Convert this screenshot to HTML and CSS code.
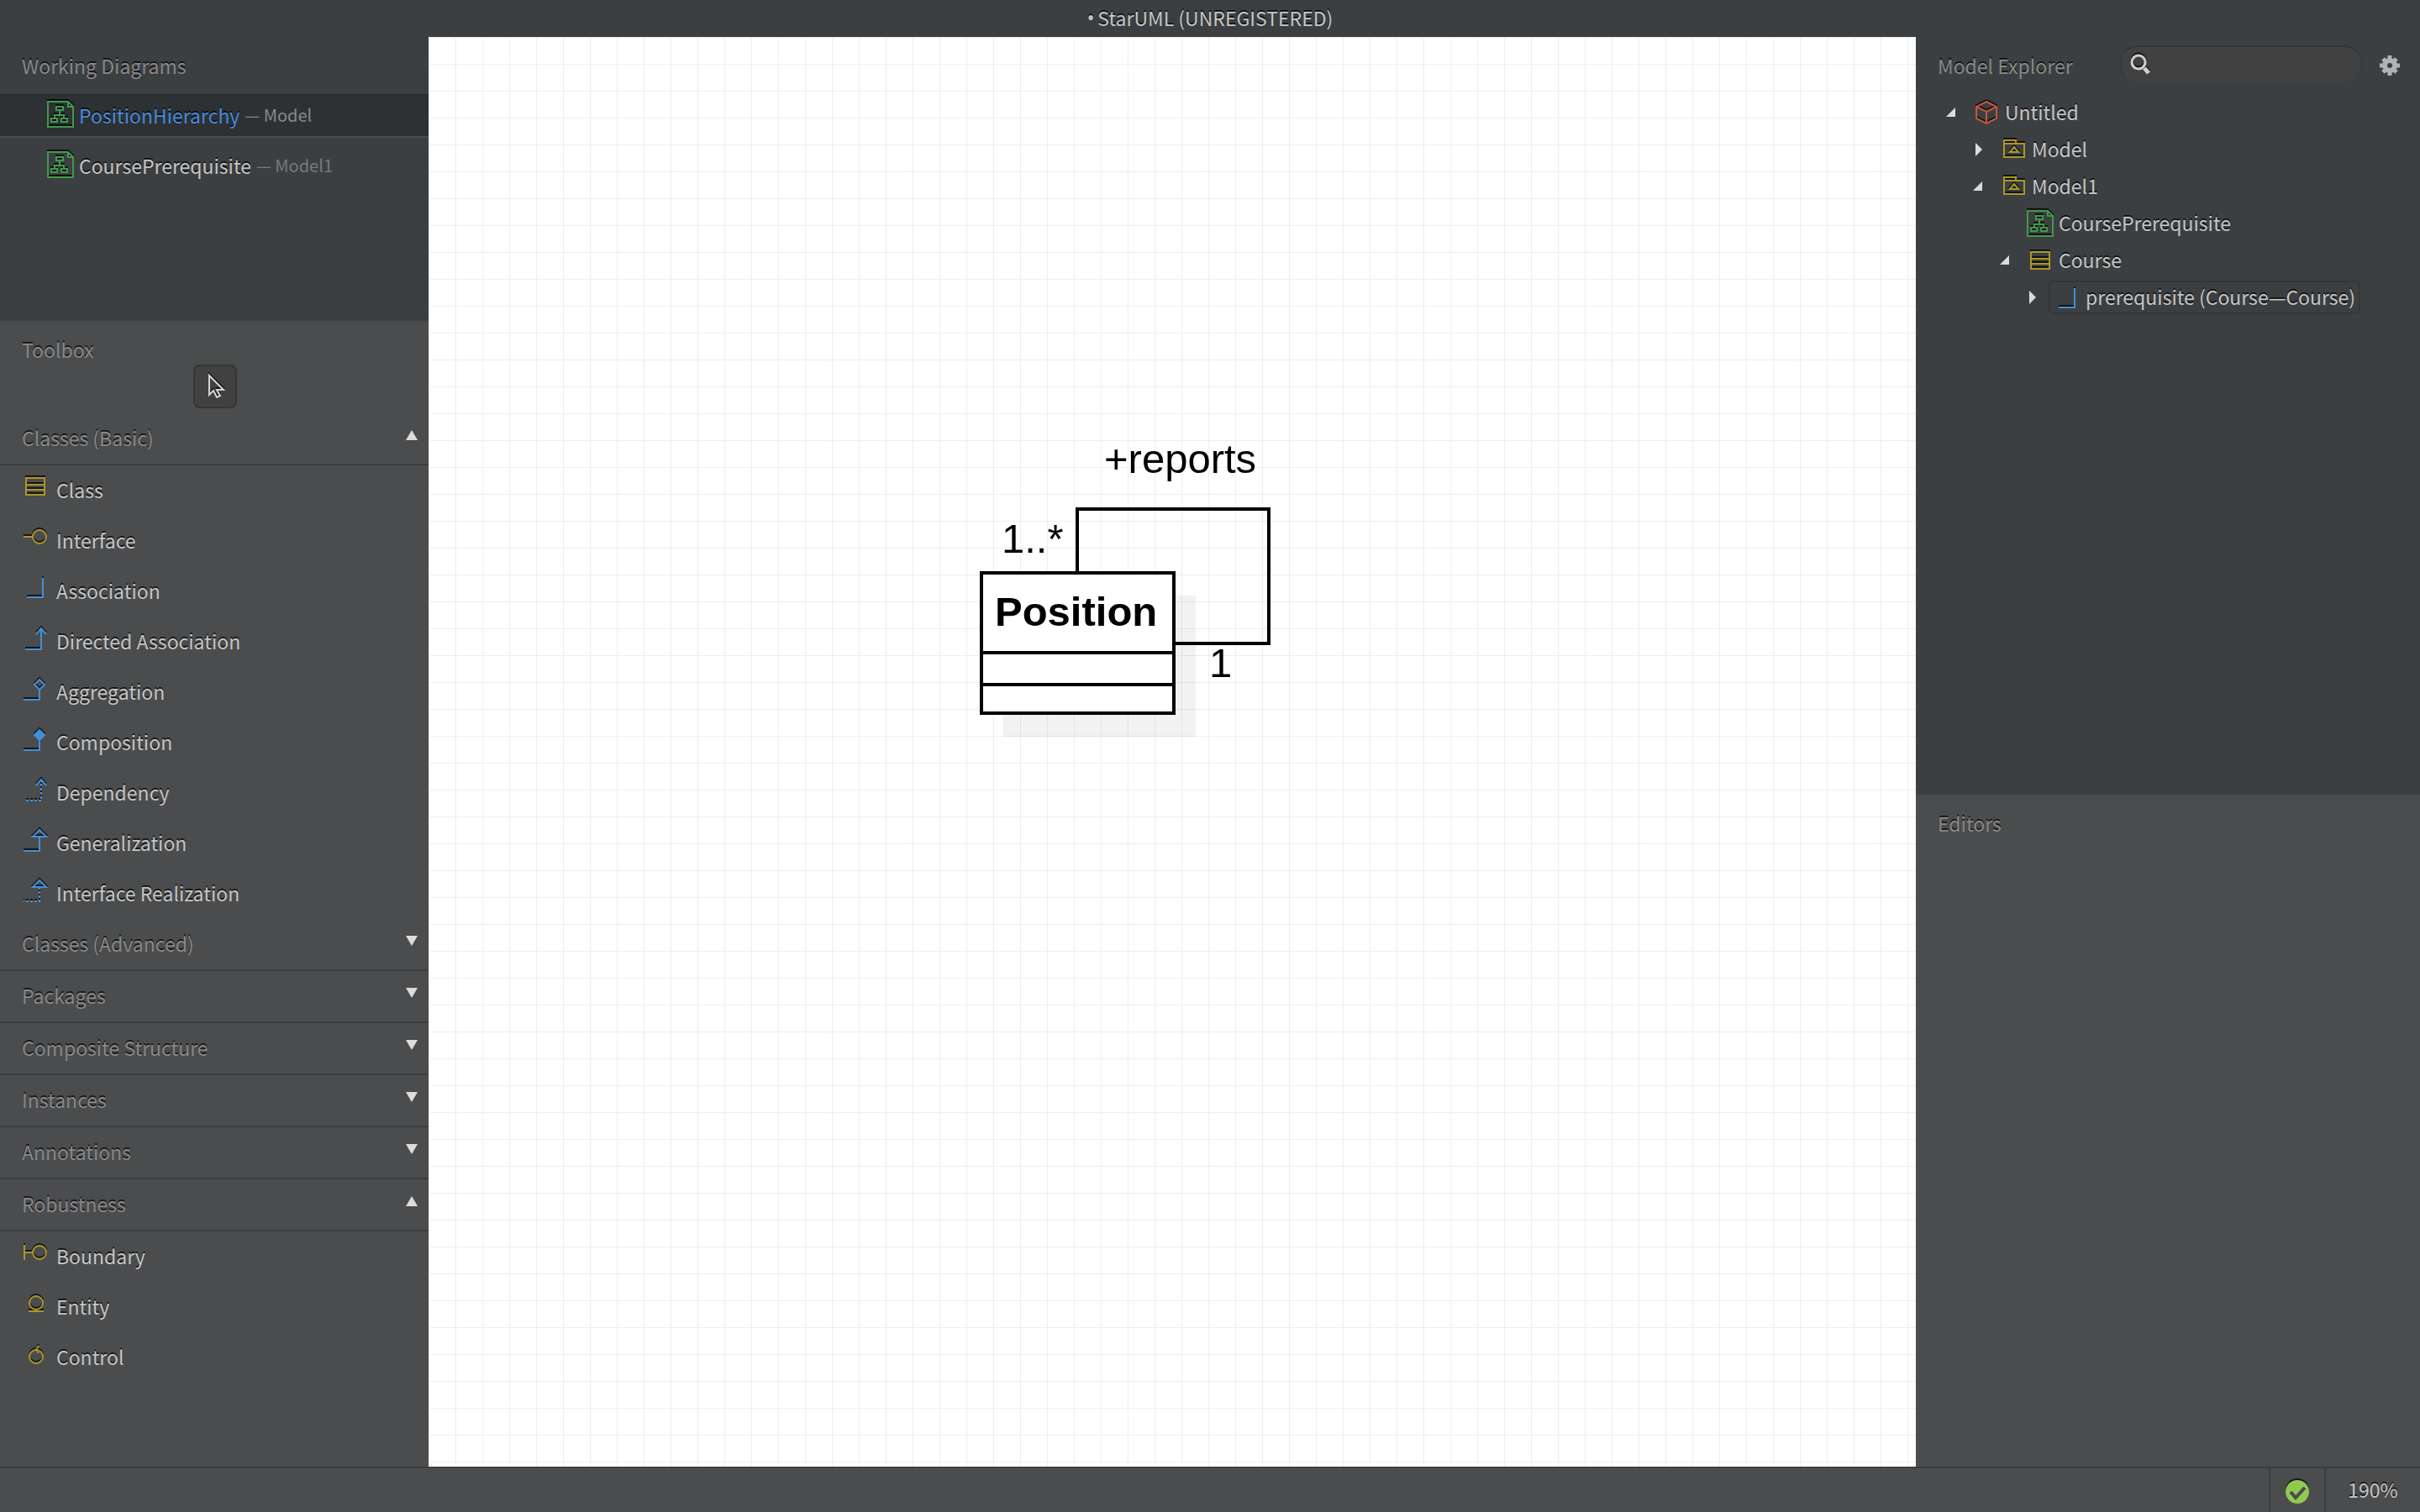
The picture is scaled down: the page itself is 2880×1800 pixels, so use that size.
FILE: index.html
```html
<!DOCTYPE html>
<html lang="en">
<head>
<meta charset="utf-8">
<title>StarUML (UNREGISTERED)</title>
<link rel="stylesheet" href="styles.css">
</head>
<body>
<svg class="sprite" aria-hidden="true">
  <symbol id="i-diagram" viewBox="0 0 32 32"><path d="M1 1H25L31 7V31H1ZM25 1V7H31M11 7H19V11H11ZM15 11V17M9 21V17H20V21M5 21H12V25H5ZM17 21H24V25H17Z"/></symbol>
  <symbol id="i-class" viewBox="0 0 32 32"><path d="M5 6H27V26H5ZM5 14H27M5 20H27"/></symbol>
  <symbol id="i-interface" viewBox="0 0 32 32"><path d="M2 16H13"/><circle cx="21" cy="16" r="8"/></symbol>
  <symbol id="i-association" viewBox="0 0 32 32"><path d="M25 5V28H6"/></symbol>
  <symbol id="i-directed" viewBox="0 0 32 32"><path d="M23 5V30H4M17 12L23 5L29 12"/></symbol>
  <symbol id="i-aggregation" viewBox="0 0 32 32"><path d="M21 6L27 12L21 18L15 12ZM21 18V30H2"/></symbol>
  <symbol id="i-composition" viewBox="0 0 32 32"><path d="M21 18V30H2"/><path d="M21 6L27 12L21 18L15 12Z" fill="currentColor"/></symbol>
  <symbol id="i-dependency" viewBox="0 0 32 32"><path d="M23 5V30H4" stroke-dasharray="3 2"/><path d="M17 12L23 5L29 12"/></symbol>
  <symbol id="i-generalization" viewBox="0 0 32 32"><path d="M21 5L13 13H29ZM21 13V30H2"/></symbol>
  <symbol id="i-realization" viewBox="0 0 32 32"><path d="M21 5L13 13H29Z"/><path d="M21 13V30H2" stroke-dasharray="3 2"/></symbol>
  <symbol id="i-boundary" viewBox="0 0 32 32"><path d="M3 7V25M3 16H13"/><circle cx="21" cy="16" r="8"/></symbol>
  <symbol id="i-entity" viewBox="0 0 32 32"><path d="M8 26H26"/><circle cx="17" cy="16" r="8"/></symbol>
  <symbol id="i-control" viewBox="0 0 32 32"><path d="M20 7L17 12L20 16"/><circle cx="17" cy="20" r="8"/></symbol>
  <symbol id="i-cube" viewBox="0 0 32 32"><path d="M16 3L28 9V23L16 29L4 23V9ZM4 9L16 15L28 9M16 15V29"/></symbol>
  <symbol id="i-package" viewBox="0 0 32 32"><path d="M5 9V5H19V9M5 9H29V25H5ZM12 19L17 13L22 19Z"/></symbol>
  <symbol id="i-cursor" viewBox="0 0 32 32"><path d="M9 3V26L14 21L18 29L22 27L18 20H26Z"/></symbol>
  <symbol id="i-down" viewBox="0 0 14 12"><path d="M0 0H14L7 12Z"/></symbol>
  <symbol id="i-up" viewBox="0 0 14 12"><path d="M7 0L14 12H0Z"/></symbol>
  <symbol id="i-open" viewBox="0 0 16 16"><path d="M15 2V13H4Z"/></symbol>
  <symbol id="i-closed" viewBox="0 0 16 16"><path d="M7 0L15 8L7 16Z"/></symbol>
</svg>

<div class="app">
  <header class="titlebar"><span class="unsaved">•</span>StarUML (UNREGISTERED)</header>

  <aside class="side">
    <section class="working">
      <h2 class="panel-title">Working Diagrams</h2>
      <ul class="files">
        <li><button class="file selected"><svg class="icon green"><use href="#i-diagram"/></svg><span class="name">PositionHierarchy</span><span class="owner">— Model</span></button></li>
        <li><button class="file"><svg class="icon green"><use href="#i-diagram"/></svg><span class="name">CoursePrerequisite</span><span class="owner dim">— Model1</span></button></li>
      </ul>
    </section>
    <section class="toolbox">
      <h2 class="panel-title compact">Toolbox</h2>
      <button class="select-tool" aria-label="Select"><svg class="icon light"><use href="#i-cursor"/></svg></button>
      <button class="group">Classes (Basic)<svg class="caret"><use href="#i-up"/></svg></button>
      <button class="tool"><svg class="icon yellow"><use href="#i-class"/></svg>Class</button>
      <button class="tool"><svg class="icon yellow"><use href="#i-interface"/></svg>Interface</button>
      <button class="tool"><svg class="icon blue"><use href="#i-association"/></svg>Association</button>
      <button class="tool"><svg class="icon blue"><use href="#i-directed"/></svg>Directed Association</button>
      <button class="tool"><svg class="icon blue"><use href="#i-aggregation"/></svg>Aggregation</button>
      <button class="tool"><svg class="icon blue"><use href="#i-composition"/></svg>Composition</button>
      <button class="tool"><svg class="icon blue"><use href="#i-dependency"/></svg>Dependency</button>
      <button class="tool"><svg class="icon blue"><use href="#i-generalization"/></svg>Generalization</button>
      <button class="tool"><svg class="icon blue"><use href="#i-realization"/></svg>Interface Realization</button>
      <button class="group">Classes (Advanced)<svg class="caret"><use href="#i-down"/></svg></button>
      <button class="group">Packages<svg class="caret"><use href="#i-down"/></svg></button>
      <button class="group">Composite Structure<svg class="caret"><use href="#i-down"/></svg></button>
      <button class="group">Instances<svg class="caret"><use href="#i-down"/></svg></button>
      <button class="group">Annotations<svg class="caret"><use href="#i-down"/></svg></button>
      <button class="group">Robustness<svg class="caret"><use href="#i-up"/></svg></button>
      <button class="tool"><svg class="icon yellow"><use href="#i-boundary"/></svg>Boundary</button>
      <button class="tool"><svg class="icon yellow"><use href="#i-entity"/></svg>Entity</button>
      <button class="tool"><svg class="icon yellow"><use href="#i-control"/></svg>Control</button>
    </section>
  </aside>

  <main class="canvas">
    <svg class="diagram" role="img" aria-label="PositionHierarchy class diagram">
      <rect class="node-shadow" x="684" y="665" width="229" height="168"/>
      <rect class="node" x="658" y="638" width="229" height="167"/>
      <path class="line" d="M658 733H887M658 771H887"/>
      <path class="line" d="M772 638V562H1000V722H887"/>
      <text class="node-name" x="674" y="701">Position</text>
      <text class="label" x="804" y="519">+reports</text>
      <text class="label" x="682" y="614">1..*</text>
      <text class="label" x="929" y="762">1</text>
    </svg>
  </main>

  <aside class="side">
    <section class="explorer">
      <div class="explorer-head">
        <h2 class="panel-title">Model Explorer</h2>
        <label class="search">
          <svg class="search-icon" viewBox="0 0 26 26"><circle cx="11" cy="11" r="8"/><path class="handle" d="M18 18L23 24"/></svg>
          <input type="search" aria-label="Search model">
        </label>
        <button class="gear" aria-label="Settings">
          <svg viewBox="0 0 24 24"><path class="teeth" d="M12 0V24M0 12H24M4 4L20 20M20 4L4 20"/><circle cx="12" cy="12" r="6"/></svg>
        </button>
      </div>
      <ul class="tree">
        <li>
          <div class="row"><svg class="twisty"><use href="#i-open"/></svg><a href="#untitled" class="entry"><svg class="icon red"><use href="#i-cube"/></svg>Untitled</a></div>
          <ul>
            <li><div class="row"><svg class="twisty"><use href="#i-closed"/></svg><a href="#model" class="entry"><svg class="icon yellow"><use href="#i-package"/></svg>Model</a></div></li>
            <li>
              <div class="row"><svg class="twisty"><use href="#i-open"/></svg><a href="#model1" class="entry"><svg class="icon yellow"><use href="#i-package"/></svg>Model1</a></div>
              <ul>
                <li><div class="row"><span class="twisty"></span><a href="#courseprerequisite" class="entry"><svg class="icon green"><use href="#i-diagram"/></svg>CoursePrerequisite</a></div></li>
                <li>
                  <div class="row"><svg class="twisty"><use href="#i-open"/></svg><a href="#course" class="entry"><svg class="icon yellow"><use href="#i-class"/></svg>Course</a></div>
                  <ul>
                    <li><div class="row"><svg class="twisty"><use href="#i-closed"/></svg><a href="#prerequisite" class="entry current"><svg class="icon blue"><use href="#i-association"/></svg>prerequisite (Course—Course)</a></div></li>
                  </ul>
                </li>
              </ul>
            </li>
          </ul>
        </li>
      </ul>
    </section>
    <section class="editors">
      <h2 class="panel-title">Editors</h2>
    </section>
  </aside>

  <footer class="statusbar">
    <button class="status" aria-label="Validation passed">
      <svg class="ok" viewBox="0 0 28 28"><circle cx="14" cy="14" r="14"/><path d="M6 14L12 21L23 9"/></svg>
    </button>
    <button class="zoom">190%</button>
  </footer>
</div>
</body>
</html>
```
FILE: styles.css
```css
:root {
  --dark: #3c3f41;
  --panel: #4b4c4d;
  --rule: #3c3d3f;
  --text: #c6c6c6;
  --muted: #898989;
  --shadow: rgba(0, 0, 0, 0.7);
}

* {
  box-sizing: border-box;
}

body {
  margin: 0;
  background: var(--dark);
  color: var(--text);
  font: 23px/36px "Noto Sans CJK SC", "Noto Sans", sans-serif;
}

button {
  margin: 0;
  padding: 0;
  border: 0;
  background: none;
  color: inherit;
  font: inherit;
  text-align: left;
  text-shadow: inherit;
}

ul {
  margin: 0;
  padding: 0;
  list-style: none;
}

.sprite {
  display: none;
}

.app {
  display: grid;
  grid-template: 44px minmax(0, 1fr) 54px / 510px minmax(0, 1fr) 600px;
  height: 100vh;
  text-shadow: 0 -2px 0 var(--shadow);
}

.titlebar {
  grid-column: 1 / -1;
  display: flex;
  align-items: center;
  justify-content: center;
  gap: 4px;
  padding-bottom: 2px;
}

.unsaved {
  font-family: "Noto Sans", sans-serif;
}

.side {
  display: flex;
  flex-direction: column;
  min-height: 0;
}

.panel-title {
  margin: 0;
  padding: 16px 26px;
  color: var(--muted);
  font-size: 23px;
  font-weight: 400;
}

.panel-title.compact {
  padding-bottom: 0;
}

/* Icons */

.icon {
  flex: none;
  width: 32px;
  height: 32px;
  fill: none;
  stroke: currentColor;
  stroke-width: 2px;
  filter: drop-shadow(0 -2px 0 var(--shadow));
}

.green { color: #409a4c; }
.yellow { color: #ab962b; }
.blue { color: #428fd7; }
.red { color: #c5573a; }
.light { color: #d4d4d4; }

/* Working diagrams */

.working {
  flex: 0 0 338px;
}

.files {
  display: flex;
  flex-direction: column;
  gap: 8px;
}

.file {
  display: flex;
  align-items: center;
  width: 100%;
  height: 52px;
  padding: 0 56px 2px;
  border: solid transparent;
  border-width: 2px 0;
}

.file .icon {
  margin: 0 6px 2px 0;
}

.file.selected {
  border-top-color: #292c2e;
  border-bottom-color: #484c4f;
  background: #2e3133;
}

.selected .name {
  color: #478bdc;
}

.owner {
  margin-left: 6px;
  color: var(--muted);
  font-size: 20px;
  text-shadow: none;
}

.owner.dim {
  color: #777a7b;
}

/* Toolbox */

.toolbox {
  flex: 1;
  display: flex;
  flex-direction: column;
  min-height: 0;
  background: var(--panel);
}

.select-tool {
  display: flex;
  align-items: center;
  justify-content: center;
  align-self: center;
  width: 52px;
  height: 52px;
  margin: 0 0 6px 2px;
  border: 2px solid #343535;
  border-radius: 8px;
  background: #404140;
}

.group {
  display: flex;
  align-items: center;
  justify-content: space-between;
  height: 62px;
  padding: 0 13px 2px 26px;
  border-bottom: 2px solid var(--rule);
  color: var(--muted);
}

.caret {
  width: 14px;
  height: 12px;
  margin-bottom: 6px;
  fill: #dcdcdc;
}

.tool {
  display: flex;
  align-items: center;
  gap: 9px;
  height: 60px;
  padding: 0 26px 2px;
}

.tool .icon {
  margin-bottom: 8px;
}

/* Diagram canvas */

.canvas {
  background-color: #fff;
  background-image:
    linear-gradient(to right, #eee 1px, transparent 1px),
    linear-gradient(to bottom, #eee 1px, transparent 1px);
  background-size: 32px 32px;
}

.diagram {
  display: block;
  width: 100%;
  height: 100%;
  font-family: "Liberation Sans", Arial, sans-serif;
  font-size: 49px;
  text-shadow: none;
}

.node-shadow {
  fill: rgba(0, 0, 0, 0.05);
}

.node {
  fill: #fff;
  stroke: #000;
  stroke-width: 4px;
}

.line {
  fill: none;
  stroke: #000;
  stroke-width: 4px;
}

.node-name {
  font-weight: 700;
}

/* Model explorer */

.explorer {
  flex: 0 0 53%;
}

.explorer-head {
  display: flex;
  align-items: center;
  height: 68px;
  padding-right: 24px;
}

.explorer-head .panel-title {
  flex: 1;
  padding-right: 0;
}

.search {
  display: flex;
  align-items: center;
  gap: 8px;
  width: 290px;
  height: 44px;
  margin: 0 20px 4px 0;
  padding: 0 10px;
  border: 2px solid #393b3b;
  border-top-color: #353636;
  border-bottom-color: #404140;
  border-radius: 22px;
  background: #404140;
}

.search-icon {
  flex: none;
  width: 26px;
  height: 26px;
  fill: none;
  stroke: #cfcfcf;
  stroke-width: 3px;
  filter: drop-shadow(0 -2px 0 var(--shadow));
}

.handle {
  stroke-width: 5px;
}

.search input {
  flex: 1;
  min-width: 0;
  border: 0;
  outline: 0;
  background: none;
  color: var(--text);
  font: inherit;
}

.gear svg {
  display: block;
  width: 24px;
  height: 24px;
  fill: none;
  stroke: #b2b2b2;
  stroke-width: 6px;
}

.gear .teeth {
  stroke-width: 5px;
  stroke-dasharray: 6 12;
}

.tree {
  padding-left: 32px;
}

.tree ul {
  padding-left: 32px;
}

.row {
  display: flex;
  align-items: center;
  gap: 14px;
  height: 44px;
}

.twisty {
  width: 16px;
  height: 16px;
  fill: #dcdcdc;
}

.entry {
  display: flex;
  align-items: center;
  gap: 6px;
  height: 40px;
  padding: 0 4px 2px;
  border: 2px solid transparent;
  border-radius: 6px;
  color: inherit;
  text-decoration: none;
  white-space: nowrap;
}

.entry .icon {
  margin-top: 2px;
}

.entry.current {
  border-color: #353637;
}

.editors {
  flex: 1;
  background: var(--panel);
}

/* Status bar */

.statusbar {
  grid-column: 1 / -1;
  display: flex;
  justify-content: flex-end;
  border-top: 2px solid var(--rule);
  background: var(--panel);
}

.status,
.zoom {
  display: flex;
  align-items: center;
  justify-content: center;
  padding-bottom: 2px;
  border-left: 2px solid var(--rule);
}

.status {
  width: 66px;
}

.zoom {
  width: 114px;
}

.ok {
  width: 28px;
  height: 28px;
  margin-top: 6px;
  overflow: visible;
  fill: #91c94f;
  filter: drop-shadow(0 -2px 0 var(--shadow));
}

.ok path {
  fill: none;
  stroke: var(--panel);
  stroke-width: 4px;
}
```
